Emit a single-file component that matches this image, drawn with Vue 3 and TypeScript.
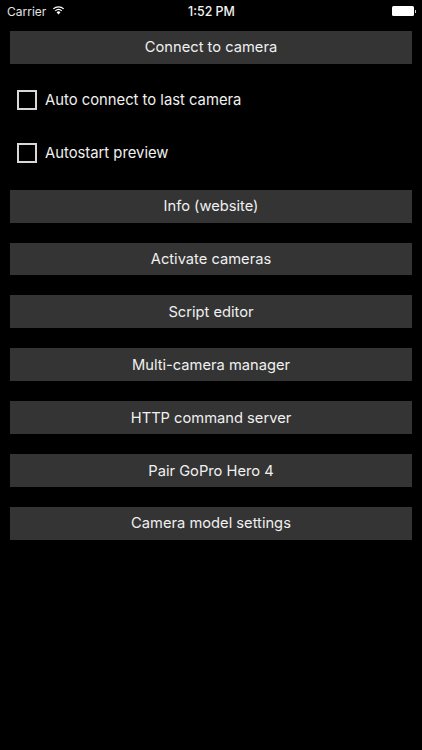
<script setup lang="ts">
interface Row {
  kind: 'button' | 'check'
  label: string
}
const rows: Row[] = [
  { kind: 'button', label: 'Connect to camera' },
  { kind: 'check', label: 'Auto connect to last camera' },
  { kind: 'check', label: 'Autostart preview' },
  { kind: 'button', label: 'Info (website)' },
  { kind: 'button', label: 'Activate cameras' },
  { kind: 'button', label: 'Script editor' },
  { kind: 'button', label: 'Multi-camera manager' },
  { kind: 'button', label: 'HTTP command server' },
  { kind: 'button', label: 'Pair GoPro Hero 4' },
  { kind: 'button', label: 'Camera model settings' },
]
</script>

<template>
  <div class="screen">
    <header class="status">
      <div class="status-left">
        <span>Carrier</span>
        <svg class="wifi" width="13" height="10" viewBox="0 0 14 10">
          <path d="M7 9.8 4.9 7.4a3 3 0 0 1 4.2 0Z" fill="#fff" />
          <path d="M3.5 6A5.2 5.2 0 0 1 10.5 6" fill="none" stroke="#fff" stroke-width="1.3" />
          <path d="M1.4 3.8A8.2 8.2 0 0 1 12.6 3.8" fill="none" stroke="#fff" stroke-width="1.3" />
        </svg>
      </div>
      <div class="status-time">1:52 PM</div>
      <div class="status-right">
        <div class="battery"></div>
        <div class="battery-tip"></div>
      </div>
    </header>
    <main class="list">
      <template v-for="row in rows" :key="row.label">
        <button v-if="row.kind === 'button'" class="btn" type="button">{{ row.label }}</button>
        <label v-else class="check">
          <span class="box"></span>
          <span>{{ row.label }}</span>
        </label>
      </template>
    </main>
  </div>
</template>

<style>
html, body { margin: 0; background: #000; }
</style>

<style scoped>
.screen {
  width: 422px;
  height: 750px;
  background: #000;
  color: #fff;
  font-family: Inter, "Liberation Sans", sans-serif;
  overflow: hidden;
}
.status {
  height: 22px;
  display: grid;
  grid-template-columns: 1fr auto 1fr;
  align-items: center;
  padding: 0 6px 0 7px;
  font-size: 12px;
  color: #e4e4e4;
}
.status-left { display: flex; align-items: center; gap: 6px; }
.wifi { margin-top: -2px; }
.status-time { font-weight: 500; font-size: 12.4px; color: #f2f2f2; }
.status-right { display: flex; justify-content: flex-end; align-items: center; }
.battery { width: 22px; height: 10px; background: #fff; border-radius: 1.5px; }
.battery-tip { width: 1.5px; height: 3px; background: #ccc; margin-left: 0.5px; }
.list {
  display: flex;
  flex-direction: column;
  gap: 20px;
  padding: 9px 10px 0;
}
.btn {
  height: 32.9px;
  border: 0;
  padding: 0;
  background: #343434;
  color: #f0f0f0;
  font: inherit;
  font-size: 14.7px;
  text-align: center;
}
.check {
  height: 32.9px;
  display: flex;
  align-items: center;
  gap: 8px;
  padding-left: 7px;
  font-size: 14.8px;
  color: #f0f0f0;
}
.box {
  width: 16px;
  height: 16px;
  border: 2px solid #d8d8d8;
}
</style>
